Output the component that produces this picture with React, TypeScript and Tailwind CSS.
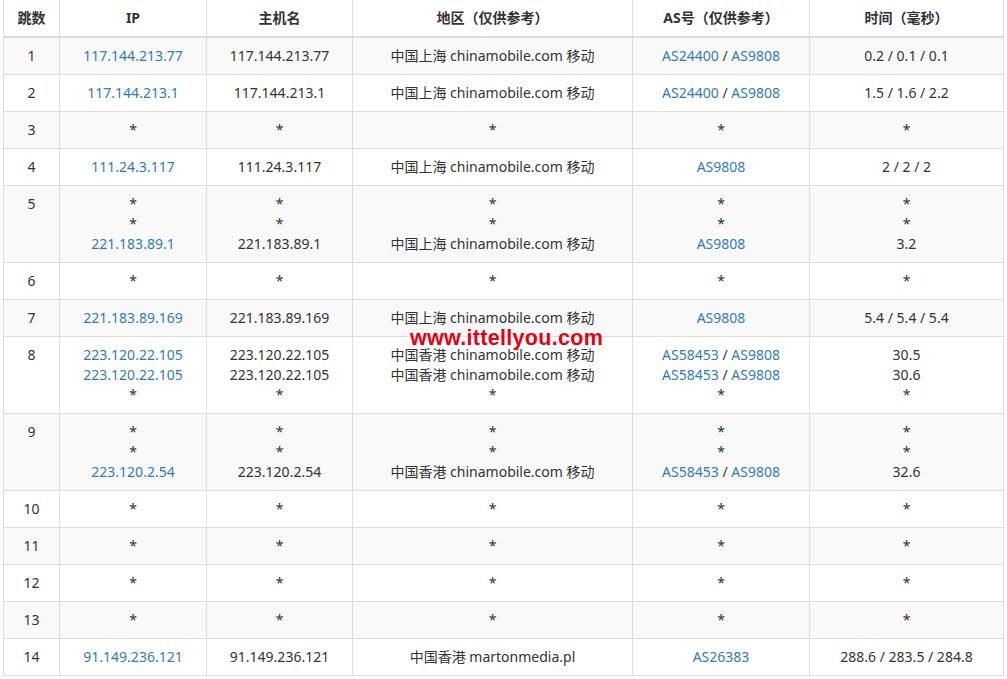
const SH = "中国上海 chinamobile.com 移动";
const HK = "中国香港 chinamobile.com 移动";

type Cell = { ip: string; host: string; area: string; as: string[]; time: string };

const star: Cell = { ip: "*", host: "*", area: "*", as: [], time: "*" };

const hops: Cell[][] = [
  [{ ip: "117.144.213.77", host: "117.144.213.77", area: SH, as: ["AS24400", "AS9808"], time: "0.2 / 0.1 / 0.1" }],
  [{ ip: "117.144.213.1", host: "117.144.213.1", area: SH, as: ["AS24400", "AS9808"], time: "1.5 / 1.6 / 2.2" }],
  [star],
  [{ ip: "111.24.3.117", host: "111.24.3.117", area: SH, as: ["AS9808"], time: "2 / 2 / 2" }],
  [star, star, { ip: "221.183.89.1", host: "221.183.89.1", area: SH, as: ["AS9808"], time: "3.2" }],
  [star],
  [{ ip: "221.183.89.169", host: "221.183.89.169", area: SH, as: ["AS9808"], time: "5.4 / 5.4 / 5.4" }],
  [
    { ip: "223.120.22.105", host: "223.120.22.105", area: HK, as: ["AS58453", "AS9808"], time: "30.5" },
    { ip: "223.120.22.105", host: "223.120.22.105", area: HK, as: ["AS58453", "AS9808"], time: "30.6" },
    star,
  ],
  [star, star, { ip: "223.120.2.54", host: "223.120.2.54", area: HK, as: ["AS58453", "AS9808"], time: "32.6" }],
  [star],
  [star],
  [star],
  [star],
  [{ ip: "91.149.236.121", host: "91.149.236.121", area: "中国香港 martonmedia.pl", as: ["AS26383"], time: "288.6 / 283.5 / 284.8" }],
];

const link = "text-[#337ab7]";
const td = "border border-[#ddd] px-2 py-2 align-top text-center";

function Lines({ items, render }: { items: Cell[]; render: (c: Cell) => React.ReactNode }) {
  return (
    <>
      {items.map((c, i) => (
        <div key={i}>{render(c)}</div>
      ))}
    </>
  );
}

export default function App() {
  return (
    <div
      className="relative bg-white pl-[3px] text-[14px] leading-5 text-[#333]"
      style={{ fontFamily: '"Noto Sans", "Noto Sans CJK SC", sans-serif' }}
    >
      <table className="w-[1000px] table-fixed border-collapse">
        <colgroup>
          <col className="w-[56px]" />
          <col className="w-[147px]" />
          <col className="w-[146px]" />
          <col className="w-[280px]" />
          <col className="w-[177px]" />
          <col className="w-[194px]" />
        </colgroup>
        <thead>
          <tr>
            {["跳数", "IP", "主机名", "地区（仅供参考）", "AS号（仅供参考）", "时间（毫秒）"].map((h) => (
              <th key={h} className="border-x border-b-2 border-[#ddd] px-2 py-2 text-center font-bold">
                {h}
              </th>
            ))}
          </tr>
        </thead>
        <tbody>
          {hops.map((items, i) => (
            <tr key={i} className={i % 2 === 0 ? "bg-[#f9f9f9]" : "bg-white"}>
              <td className={td}>{i + 1}</td>
              <td className={td}>
                <Lines items={items} render={(c) => <span className={c.ip === "*" ? "" : link}>{c.ip}</span>} />
              </td>
              <td className={td}>
                <Lines items={items} render={(c) => c.host} />
              </td>
              <td className={td}>
                <Lines items={items} render={(c) => c.area} />
              </td>
              <td className={td}>
                <Lines
                  items={items}
                  render={(c) =>
                    c.as.length === 0 ? (
                      "*"
                    ) : (
                      <>
                        {c.as.map((a, j) => (
                          <span key={a}>
                            {j > 0 && " / "}
                            <span className={link}>{a}</span>
                          </span>
                        ))}
                      </>
                    )
                  }
                />
              </td>
              <td className={td}>
                <Lines items={items} render={(c) => c.time} />
              </td>
            </tr>
          ))}
        </tbody>
      </table>
      {/* 水印 */}
      <div
        className="absolute left-[410px] top-[326px] text-[21.5px] font-bold leading-6 tracking-[0.3px] text-[#e60012]"
        style={{ fontFamily: '"Liberation Sans", Arial, sans-serif' }}
      >
        www.ittellyou.com
      </div>
    </div>
  );
}
